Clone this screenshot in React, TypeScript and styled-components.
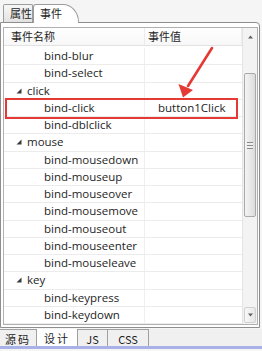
import React from "react";
import styled, { createGlobalStyle } from "styled-components";

const Global = createGlobalStyle`
  html, body { margin: 0; padding: 0; background: #ffffff; }
  * { box-sizing: border-box; }
`;

const Root = styled.div`
  position: relative;
  width: 262px;
  height: 351px;
  background: #f5f5f5;
  font-family: "Open Sans", "Noto Sans CJK SC", sans-serif;
  font-size: 11px;
  color: #1e1e1e;
  display: flex;
  flex-direction: column;
  overflow: hidden;
`;

const TopTabs = styled.div`
  height: 22px;
  display: flex;
  align-items: flex-end;
  padding-left: 3px;
`;

const TopTab = styled.div<{ $active?: boolean }>`
  height: ${(p) => (p.$active ? 19 : 18)}px;
  width: ${(p) => (p.$active ? 46 : 30)}px;
  margin-bottom: ${(p) => (p.$active ? -1 : 0)}px;
  border: 1px solid #9c9c9c;
  border-bottom: none;
  border-radius: ${(p) => (p.$active ? "3px 16px 0 0 / 3px 18px 0 0" : "2px 2px 0 0")};
  background: ${(p) => (p.$active ? "#ffffff" : "linear-gradient(#f7f7f7, #e2e2e2)")};
  font-family: "Noto Sans CJK SC", sans-serif;
  font-size: 11px;
  line-height: 17px;
  padding-left: 6px;
  z-index: ${(p) => (p.$active ? 1 : 0)};
  position: relative;
`;

const Panel = styled.div`
  height: 306px;
  margin-right: 2px;
  border: 1px solid #8e8e8e;
  border-radius: 0 4px 0 0;
  background: #ffffff;
  padding: 4px 1px 1px 2px;
  display: flex;
`;

const ListBox = styled.div`
  flex: 1;
  height: 298px;
  border: 1px solid #b0b0b0;
  display: flex;
  background: #ffffff;
`;

const Grid = styled.div`
  position: relative;
  flex: 1;
  display: flex;
  flex-direction: column;
  overflow: hidden;
`;

const HeaderRow = styled.div`
  height: 18px;
  display: grid;
  grid-template-columns: 141px 1fr;
  background: linear-gradient(#ffffff, #f7f7f7);
  border-bottom: 1px solid #e2e2e2;
  font-family: "Noto Sans CJK SC", sans-serif;
  font-size: 11px;
  line-height: 17px;
`;

const HeaderCell = styled.div<{ $pad: number }>`
  padding-left: ${(p) => p.$pad}px;
  border-right: 1px solid #ececec;
`;

const Rows = styled.div`
  padding-top: 2px;
  display: flex;
  flex-direction: column;
`;

const Row = styled.div<{ $hl?: boolean }>`
  position: relative;
  height: 17.25px;
  display: grid;
  grid-template-columns: 141px 1fr;
  border-bottom: 1px solid #ececec;
  line-height: 16px;
  font-size: 11.5px;

  &::after {
    content: "";
    display: ${(p) => (p.$hl ? "block" : "none")};
    position: absolute;
    left: 1px;
    right: 4px;
    top: -2px;
    bottom: -3px;
    border: 2px solid #e53935;
    z-index: 2;
  }
`;

const NameCell = styled.div<{ $group?: boolean }>`
  display: flex;
  align-items: center;
  gap: 5px;
  padding-left: ${(p) => (p.$group ? 12 : 40)}px;
  border-right: 1px solid #efefef;
  white-space: nowrap;
  overflow: hidden;
`;

const ValueCell = styled.div`
  padding-left: 13px;
  white-space: nowrap;
`;

const Scrollbar = styled.div`
  width: 15px;
  display: flex;
  flex-direction: column;
  background: #f3f3f3;
  border-left: 1px solid #e4e4e4;
`;

const ScrollBtn = styled.div<{ $down?: boolean }>`
  height: 16px;
  display: flex;
  align-items: center;
  justify-content: center;
  margin: 1px;
  border-radius: 2px;
  border: 1px solid ${(p) => (p.$down ? "#d0d0d0" : "transparent")};
  background: ${(p) => (p.$down ? "linear-gradient(90deg, #f8f8f8, #e6e6e6)" : "transparent")};
  transform: ${(p) => (p.$down ? "scaleY(-1)" : "none")};
`;

const Track = styled.div`
  flex: 1;
  padding: 27px 1px 0 1px;
`;

const Thumb = styled.div`
  height: 144px;
  border: 1px solid #a9a9a9;
  border-radius: 2px;
  background: linear-gradient(90deg, #f4f4f4, #dcdcdc);
  display: flex;
  align-items: center;
  justify-content: center;
`;

const Grip = styled.div`
  width: 6px;
  height: 7px;
  background: repeating-linear-gradient(#8a8a8a 0 1px, #f0f0f0 1px 3px);
`;

const BottomTabs = styled.div`
  height: 20px;
  display: flex;
  background: #f0f0f0;
  border-bottom: 3px solid #a9b2e6;
  margin-top: 1px;
`;

const BottomTab = styled.div<{ $active?: boolean; $w: number; $cjk?: boolean }>`
  width: ${(p) => p.$w}px;
  border-right: 1px solid #a0a0a0;
  border-top: ${(p) => (p.$active ? "none" : "1px solid #a0a0a0")};
  background: ${(p) => (p.$active ? "#ffffff" : "#f0f0f0")};
  font-family: "Noto Sans CJK SC", "Open Sans", sans-serif;
  font-size: 11px;
  letter-spacing: ${(p) => (p.$cjk ? 2 : 0)}px;
  text-align: center;
  line-height: 18px;
`;

const Overlay = styled.svg`
  position: absolute;
  left: 0;
  top: 0;
  pointer-events: none;
  z-index: 5;
`;

const Caret = () => (
  <svg width="6" height="6" viewBox="0 0 6 6">
    <polygon points="5.5,0.5 5.5,5.5 0.5,5.5" fill="#3a3a3a" />
  </svg>
);

const Arrow = () => (
  <svg width="5" height="4" viewBox="0 0 5 4">
    <polygon points="2.5,0.5 5,3.5 0,3.5" fill="#606060" />
  </svg>
);

type Item = { name: string; group?: boolean; value?: string; hl?: boolean };

const items: Item[] = [
  { name: "bind-blur" },
  { name: "bind-select" },
  { name: "click", group: true },
  { name: "bind-click", value: "button1Click", hl: true },
  { name: "bind-dblclick" },
  { name: "mouse", group: true },
  { name: "bind-mousedown" },
  { name: "bind-mouseup" },
  { name: "bind-mouseover" },
  { name: "bind-mousemove" },
  { name: "bind-mouseout" },
  { name: "bind-mouseenter" },
  { name: "bind-mouseleave" },
  { name: "key", group: true },
  { name: "bind-keypress" },
  { name: "bind-keydown" },
];

export default function App() {
  return (
    <>
      <Global />
      <Root>
        <TopTabs>
          <TopTab>属性</TopTab>
          <TopTab $active>事件</TopTab>
        </TopTabs>
        <Panel>
          <ListBox>
            <Grid>
              <HeaderRow>
                <HeaderCell $pad={7}>事件名称</HeaderCell>
                <HeaderCell $pad={3}>事件值</HeaderCell>
              </HeaderRow>
              <Rows>
                {items.map((it) => (
                  <Row key={it.name} $hl={it.hl}>
                    <NameCell $group={it.group}>
                      {it.group && <Caret />}
                      {it.name}
                    </NameCell>
                    <ValueCell>{it.value ?? ""}</ValueCell>
                  </Row>
                ))}
              </Rows>
            </Grid>
            <Scrollbar>
              <ScrollBtn>
                <Arrow />
              </ScrollBtn>
              <Track>
                <Thumb>
                  <Grip />
                </Thumb>
              </Track>
              <ScrollBtn $down>
                <Arrow />
              </ScrollBtn>
            </Scrollbar>
          </ListBox>
        </Panel>
        <BottomTabs>
          <BottomTab $w={37} $cjk>源码</BottomTab>
          <BottomTab $w={41} $active $cjk>设计</BottomTab>
          <BottomTab $w={30}>JS</BottomTab>
          <BottomTab $w={41}>CSS</BottomTab>
        </BottomTabs>
        <Overlay width="262" height="351" viewBox="0 0 262 351">
          <line x1="212" y1="48" x2="188" y2="86" stroke="#e53935" strokeWidth="2.6" strokeLinecap="round" />
          <polygon points="183,97.5 178.5,84 193,90" fill="#e53935" />
        </Overlay>
      </Root>
    </>
  );
}
